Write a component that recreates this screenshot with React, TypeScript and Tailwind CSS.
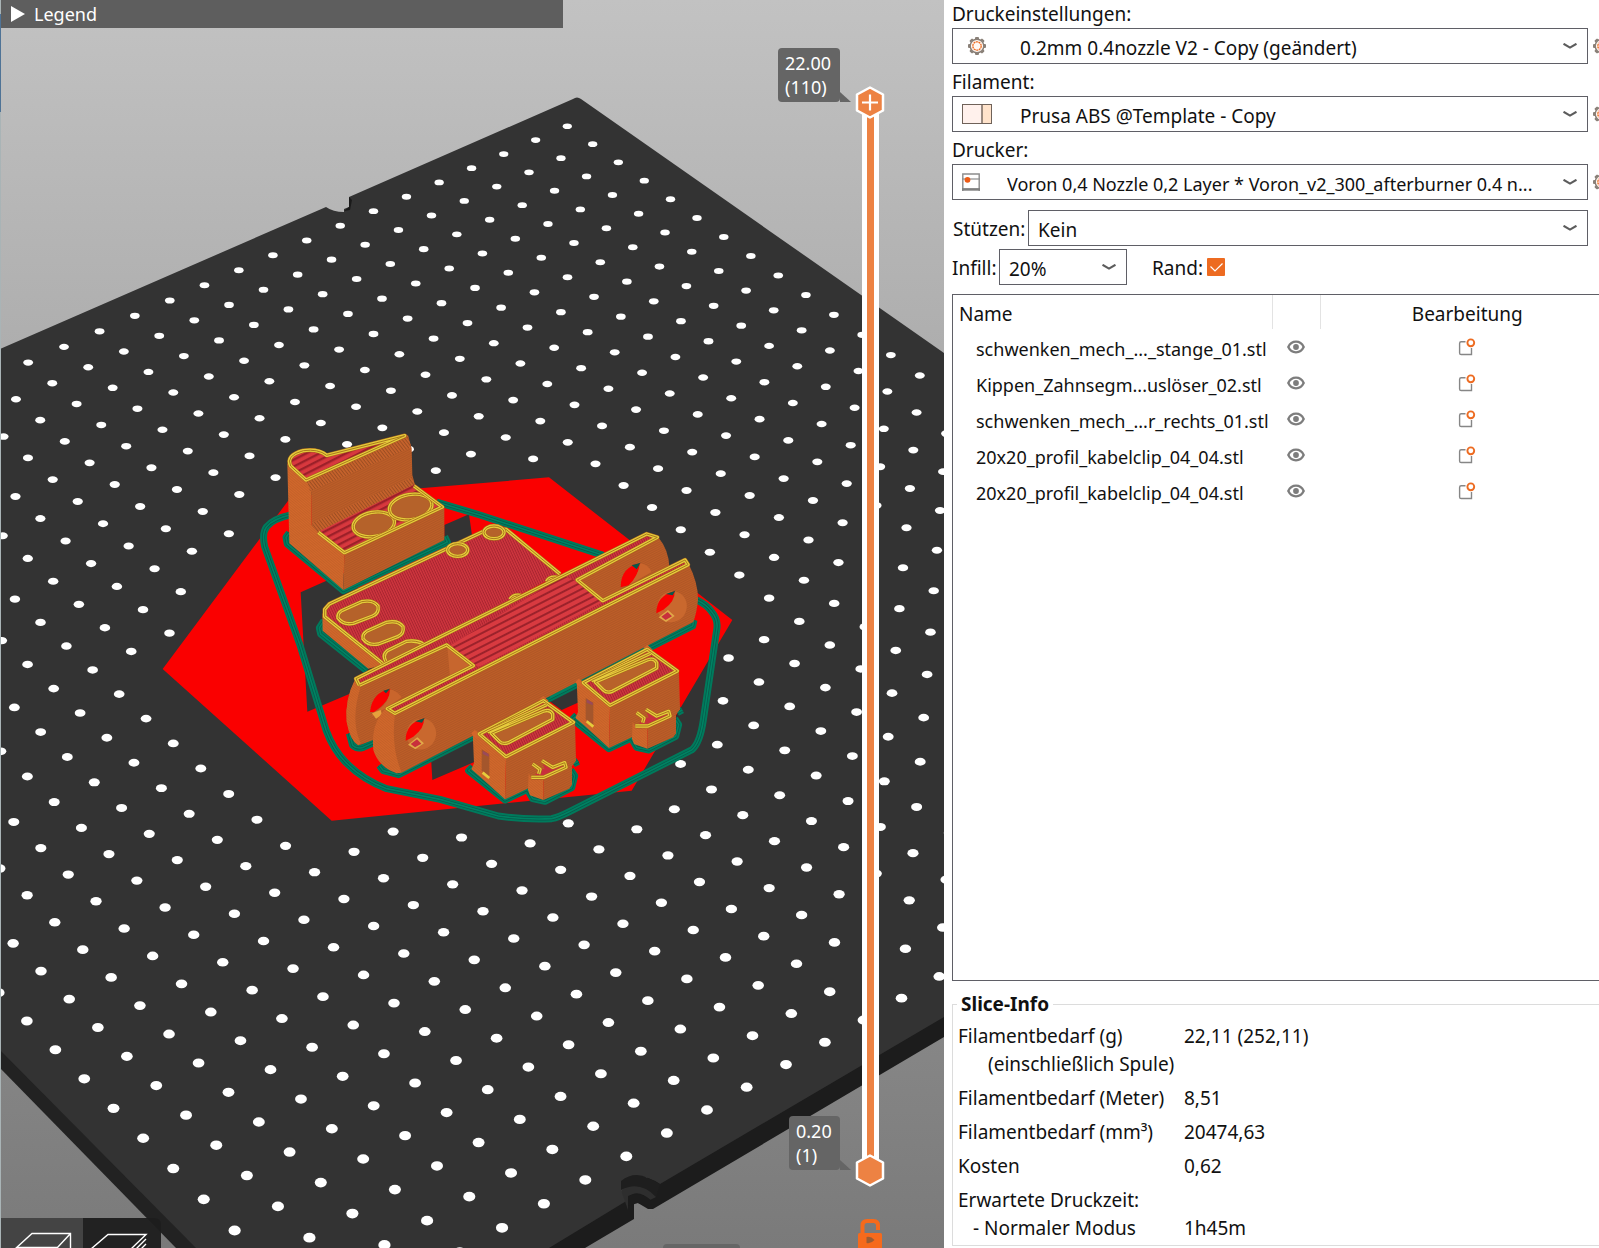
import React, { useState } from 'react';

interface Preset {
    id: string;
    label: string;
    value: string;
    indent: string;
    icon: React.ReactNode;
}

const GEAR_TEETH = [0, 45, 90, 135, 180, 225, 270, 315];

const GearIcon: React.FC = () => (
    <svg className="w-[18px] h-[18px] shrink-0" viewBox="0 0 18 18" fill="none">
        {GEAR_TEETH.map((angle) => (
            <rect key={angle} x="7" y="0" width="4" height="4" rx="1" fill="#8a8078" transform={`rotate(${angle} 9 9)`} />
        ))}
        <circle cx="9" cy="9" r="6.8" fill="#fff8f2" stroke="#8a8078" strokeWidth="1.4" />
        <circle cx="9" cy="9" r="4.2" stroke="#ed6b21" strokeWidth="1.3" strokeDasharray="2 .6" />
    </svg>
);

const SpoolIcon: React.FC = () => (
    <svg className="w-[30px] h-5" viewBox="0 0 30 20">
        <rect x=".5" y=".5" width="29" height="19" fill="#fff1ec" stroke="#6f6259" />
        <rect x="20" y="1" width="9" height="18" fill="#ffe3cb" />
        <path d="M20 0v20" stroke="#6f6259" strokeWidth="1.4" />
    </svg>
);

const PrinterIcon: React.FC = () => (
    <svg className="w-[18px] h-[18px]" viewBox="0 0 18 18" fill="none">
        <path d="M.8 18V1h16.4v17" stroke="#8c8c8c" strokeWidth="1.4" />
        <path d="M0 6h18" stroke="#8c8c8c" strokeWidth="1.2" />
        <path d="M0 16.4h18" stroke="#808080" strokeWidth="2.6" />
        <circle cx="5.5" cy="6.8" r="2.9" fill="#ed5b16" />
    </svg>
);

const EyeIcon: React.FC = () => (
    <svg className="w-[18px] h-3.5" viewBox="0 0 18 14" fill="none">
        <path d="M1.3 7C3 3.4 5.8 1.7 9 1.7s6 1.7 7.7 5.3c-1.7 3.6-4.5 5.3-7.7 5.3S3 10.6 1.3 7z" stroke="#7d7d7d" strokeWidth="2.3" />
        <circle cx="9" cy="7" r="2.9" fill="#7d7d7d" />
    </svg>
);

const EditIcon: React.FC = () => (
    <svg className="w-[18px] h-[18px]" viewBox="0 0 18 18" fill="none">
        <path d="M7.5 3.8H3.2Q1.6 3.8 1.6 5.4V14.9Q1.6 16.5 3.2 16.5H13.5V10" stroke="#868686" strokeWidth="1.4" />
        <circle cx="12.8" cy="4.8" r="3.4" stroke="#ed6b21" strokeWidth="1.9" />
    </svg>
);

const presets: Preset[] = [
    { id: 'print', label: 'Druckeinstellungen:', value: '0.2mm 0.4nozzle V2 - Copy (geändert)', indent: 'pl-[67px]', icon: <span className="pl-1.5"><GearIcon /></span> },
    { id: 'filament', label: 'Filament:', value: 'Prusa ABS @Template - Copy', indent: 'pl-[67px]', icon: <SpoolIcon /> },
    { id: 'printer', label: 'Drucker:', value: 'Voron 0,4 Nozzle 0,2 Layer * Voron_v2_300_afterburner 0.4 n...', indent: 'pl-[54px] text-lg', icon: <PrinterIcon /> },
];

const objects = [
    'schwenken_mech_..._stange_01.stl',
    'Kippen_Zahnsegm...uslöser_02.stl',
    'schwenken_mech_...r_rechts_01.stl',
    '20x20_profil_kabelclip_04_04.stl',
    '20x20_profil_kabelclip_04_04.stl',
];

const sliceInfo = [
    { label: 'Filamentbedarf (g)', sub: '(einschließlich Spule)', subIndent: 'pl-[30px]', value: '22,11 (252,11)', low: false },
    { label: 'Filamentbedarf (Meter)', value: '8,51', low: false },
    { label: 'Filamentbedarf (mm³)', value: '20474,63', low: false },
    { label: 'Kosten', value: '0,62', low: false },
    { label: 'Erwartete Druckzeit:', sub: '- Normaler Modus', subIndent: 'pl-[15px]', value: '1h45m', low: true },
];

const Combo: React.FC<{ id: string; value: string; indent: string; icon?: React.ReactNode; className: string }> = ({ id, value, indent, icon, className }) => (
    <div className={`relative h-9 ${className}`}>
        <select id={id} className={`w-full h-full appearance-none border border-[#5f5f66] bg-white pt-1 pr-8 outline-none ${indent}`}>
            <option>{value}</option>
        </select>
        {icon && <span className="pointer-events-none absolute inset-y-0 left-2.5 flex items-center">{icon}</span>}
        <svg className="pointer-events-none absolute right-[11px] top-[15px] h-1.5 w-3.5" viewBox="0 0 14 6" fill="none">
            <path d="M.5 .8L7 4.6L13.5 .8" stroke="#5c5c5c" strokeWidth="2.2" />
        </svg>
    </div>
);

// corners of the red area on the plate
const RED_AREA = [
    [163, 669],
    [292, 496],
    [423, 488],
    [549, 477],
    [732, 620],
    [632, 791],
    [332, 821],
];

const distanceToRedArea = (x: number, y: number) =>
    Math.min(
        ...RED_AREA.map(([x1, y1], n) => {
            const [x2, y2] = RED_AREA[(n + 1) % RED_AREA.length];
            const dx = x2 - x1;
            const dy = y2 - y1;
            const t = Math.max(0, Math.min(1, ((x - x1) * dx + (y - y1) * dy) / (dx * dx + dy * dy)));
            return Math.hypot(x - x1 - t * dx, y - y1 - t * dy);
        })
    );

// 29 x 29 grid of dots on the build plate, seen in perspective
const bedDots = Array.from({ length: 29 * 29 }, (_, n) => {
    const i = n % 29;
    const j = Math.floor(n / 29);
    const w = 1 - 0.00404 * i - 0.00528 * j;
    return {
        x: (567.3 - 33.81 * i + 22.26 * j) / w,
        y: (126.2 + 13.31 * i + 17.2 * j) / w,
        rx: 4.6 / w,
        ry: 2.8 / (w * w),
    };
}).filter((dot) => distanceToRedArea(dot.x, dot.y) > 15);

const Bead: React.FC<{ d: string }> = ({ d }) => (
    <g fill="none" strokeLinejoin="round">
        <path d={d} stroke="#a8641c" strokeWidth="13" />
        <path d={d} stroke="#e6cc3c" strokeWidth="10" />
        <path d={d} stroke="#a9791c" strokeWidth="3" />
    </g>
);

const Brim: React.FC<{ d: string }> = ({ d }) => (
    <g fill="none" strokeLinejoin="round">
        <path d={d} stroke="#007a5c" strokeWidth="21" />
        <path d={d} stroke="#07594a" strokeWidth="9" />
        <path d={d} stroke="#008262" strokeWidth="5" />
    </g>
);

const Clip: React.FC = () => (
    <g>
        <Brim d="M668 1100L656 1112L765 1200L832 1168L848 1196L885 1204L965 1163L974 1128L962 1110M970 1092L985 1084" />
        <path d="M668 995L690 1000L768 1075L765 1198L690 1130L664 1108L672 1090Z" fill="url(#wallLeft)" />
        <path d="M768 1075L975 967L978 1082L965 1100L835 1165L765 1198Z" fill="url(#wallFront)" />
        <path d="M695 1048L718 1062V1130L695 1112Z" fill="#a4562c" />
        <path d="M698 1052L716 1062V1070L698 1062Z" fill="#9a4a5a" />
        <path d="M698 1118L718 1134" stroke="#e6cc3c" strokeWidth="8" />
        <path d="M664 1000L674 990L690 1000L690 1016L672 1010ZM868 898L880 888L896 903L885 912Z" fill="#d4662a" />
        <path d="M688 1002L880 900L973 967L768 1073Z" fill="url(#solidFine)" />
        <Bead d="M688 1002L880 902L970 967L768 1070Z" />
        <path d="M722 1005L890 930L910 945V960L775 1032H752Z" fill="#b8622a" />
        <Bead d="M712 996L890 914M724 1000L880 934Q900 926 908 942V958L775 1028Q758 1034 748 1024Z" />
        <path d="M836 1120L848 1140L880 1138V1200L840 1186L834 1170Z" fill="url(#wallLeft)" />
        <path d="M880 1138L950 1104L966 1098V1154L958 1166L880 1200Z" fill="url(#wallFront)" />
        <path d="M848 1134L866 1112L848 1096L866 1104L884 1108L876 1084L904 1100L944 1086L948 1100L886 1130Z" fill="#c8303c" />
        <Bead d="M844 1132L882 1132L948 1102L944 1088L908 1102L876 1082M866 1122L870 1108L848 1092" />
    </g>
);

const Parts: React.FC = () => (
    <g transform="translate(250 400) scale(.33333)">
        {/* collision area */}
        <path d="M-262 807L125 288L520 264L897 232L1447 660L1145 1172L245 1262Z" fill="#fa0000" />
        <path d="M583 375L657 343L668 420L583 460ZM152 577L290 515L420 700V830L172 935ZM543 1070L680 1010V1083L547 1140ZM880 890L1010 840L990 905L935 930Z" fill="#333" />

        {/* skirt */}
        <Brim d="M125 344Q70 356 50 380Q35 400 44 440L150 735L228 990Q250 1050 290 1090Q340 1140 410 1166L570 1198L745 1248Q830 1260 905 1256Q925 1252 960 1234L1325 1050Q1350 1030 1360 960L1400 690Q1406 660 1385 635Q1368 612 1340 600M560 306L690 345L1060 466" />

        {/* slide block */}
        <Brim d="M118 398L108 412L112 432L280 572L592 426L584 410" />
        <path d="M112 190L118 430L280 570L283 460L205 395L185 375L183 265L168 240Z" fill="url(#wallLeft)" />
        <path d="M168 240L470 103L485 145L487 225L495 255L205 397L185 378L183 265Z" fill="url(#wallFront)" />
        <path d="M172 244L474 106L484 142L180 274ZM185 370L486 232L495 256L205 400Z" fill="url(#ridges)" />
        <path d="M168 240L120 198Q106 162 160 150Q205 144 230 165L470 105Z" fill="url(#solidCoarse)" />
        <Bead d="M168 240L122 198Q106 166 160 152Q205 146 230 166L464 107Z" />
        <path d="M205 395L490 255L580 320L283 460Z" fill="url(#solidCoarse)" />
        <path d="M283 460L583 320V420L280 570Z" fill="url(#wallFront)" />
        <ellipse cx="372" cy="373" rx="62" ry="36" fill="#b5622a" transform="rotate(-10 372 373)" />
        <ellipse cx="482" cy="321" rx="64" ry="36" fill="#b5622a" transform="rotate(-10 482 321)" />
        <Bead d="M310 384A62 36 -10 1 1 433 362A62 36 -10 1 1 310 384Z" />
        <Bead d="M419 332A64 36 -10 1 1 545 310A64 36 -10 1 1 419 332Z" />
        <Bead d="M205 397L283 458L577 321L492 258" />

        {/* flat plate */}
        <Brim d="M222 662L208 684L212 702L350 812" />
        <path d="M217 640L218 692L355 806L400 795L300 700Z" fill="url(#wallLeft)" />
        <path d="M222 630L236 612L722 382L768 388L930 522L400 795L222 650Z" fill="url(#solidFine)" />
        <Bead d="M400 792L224 650V628L238 612L722 384L768 388L930 522" />
        <g fill="#b5622a">
            <ellipse cx="623" cy="450" rx="30" ry="19" />
            <ellipse cx="732" cy="397" rx="30" ry="19" />
            <path d="M275 632L335 605Q370 598 384 618Q388 640 368 648L310 670Q280 676 264 654Q262 640 275 632Z" />
            <path d="M350 694L410 667Q445 660 459 680Q463 702 443 710L385 732Q355 738 339 716Q337 702 350 694Z" />
            <path d="M412 752L470 724Q500 720 516 730L412 785Q396 770 412 752Z" />
        </g>
        <Bead d="M593 450A30 19 0 1 1 653 450A30 19 0 1 1 593 450Z" />
        <Bead d="M702 397A30 19 0 1 1 762 397A30 19 0 1 1 702 397Z" />
        <Bead d="M275 632L335 605Q370 598 384 618Q388 640 368 648L310 670Q280 676 264 654Q262 640 275 632Z" />
        <Bead d="M350 694L410 667Q445 660 459 680Q463 702 443 710L385 732Q355 738 339 716Q337 702 350 694Z" />
        <Bead d="M408 784Q396 766 412 752L470 724Q500 720 520 732M780 598Q790 582 812 586M890 545Q896 528 924 532" />

        {/* fork arm */}
        <Brim d="M298 1000L308 1036Q320 1048 340 1042L380 1024M388 1096L400 1112L446 1124L1328 678L1332 660M900 890L1000 838" />
        <path d="M315 838Q284 900 290 965Q300 1020 325 1036L380 1016L420 930L560 860L590 735Z" fill="url(#wallFront)" />
        <path d="M316 838Q284 900 290 965Q300 1020 325 1036L332 1030Q300 960 332 860Z" fill="url(#wallLeft)" />
        <path d="M330 858L590 735L675 797L410 925L340 945Z" fill="url(#wallFront)" />
        <path d="M592 738L672 797L600 832Z" fill="#c7662e" />
        <path d="M360 936Q366 876 422 867Q420 905 372 936Z" fill="#fa0000" />
        <path d="M400 872L420 866L408 880Z" fill="#07594a" />
        <path d="M420 868Q440 872 455 892L408 925L366 948Q366 938 385 930Q420 905 420 868Z" fill="#c9652c" />
        <path d="M366 940L392 930L396 944L378 956Z" fill="#e6a03c" />

        <path d="M980 540L1225 412Q1256 450 1258 500L1060 605Z" fill="url(#wallFront)" />
        <path d="M1112 562Q1112 500 1172 490Q1160 540 1136 556Z" fill="#fa0000" />
        <path d="M1145 496L1172 488L1160 508Z" fill="#07594a" />
        <path d="M1170 490Q1196 494 1204 516L1136 556Q1164 530 1170 490Z" fill="#c9652c" />

        <path d="M320 835L1190 400L1225 412L980 540L1060 605L1305 478L1318 492L435 942L410 925L675 797L590 735L330 858Z" fill="url(#solidFine)" />
        <path d="M600 737L940 528L978 542L1060 605L690 800L672 795Z" fill="url(#solidLong)" />
        <path d="M408 925L435 942L458 1030L455 1118L440 1120Q385 1100 370 1050Q362 970 408 925Z" fill="url(#wallLeft)" />
        <path d="M435 942L1315 490Q1345 550 1344 600Q1340 640 1330 666L455 1118Q422 1040 435 942Z" fill="url(#wallFront)" />
        <Bead d="M328 856L318 836L1190 402L1222 412L982 540L1058 602L1305 480L1314 494L435 940L412 926L670 797L590 735L328 856" />

        <g id="bore">
            <ellipse cx="514" cy="1002" rx="44" ry="47" fill="#c9682e" transform="rotate(20 514 1002)" />
            <path d="M467 1022Q466 970 522 955Q524 985 490 1010Q476 1018 467 1022Z" fill="#fa0000" />
            <path d="M496 964L524 954L516 968Z" fill="#07594a" />
            <path d="M474 1034L502 1012L522 1030L496 1048Z" fill="#e0a848" />
            <path d="M482 1032L501 1018L514 1031L495 1042Z" fill="#c8303c" />
        </g>
        <use href="#bore" x="752" y="-382" />

        <use href="#kabelclip" x="312" y="-154" />
        <g id="kabelclip">
            <Clip />
        </g>
    </g>
);

const Scene: React.FC = () => (
    <svg className="absolute inset-0 h-full w-full" viewBox="0 0 944 1248" preserveAspectRatio="xMidYMin slice">
        <defs>
            <linearGradient id="sky" x1="0" y1="0" x2="0" y2="1">
                <stop offset="0" stopColor="#c2c2c2" />
                <stop offset="1" stopColor="#7a7a7a" />
            </linearGradient>
            <pattern id="wallFront" width="6" height="6" patternUnits="userSpaceOnUse" patternTransform="rotate(-27)">
                <rect width="6" height="6" fill="#bd5e28" />
                <rect width="6" height="2" fill="#aa5425" />
            </pattern>
            <pattern id="wallLeft" width="6" height="6" patternUnits="userSpaceOnUse" patternTransform="rotate(40)">
                <rect width="6" height="6" fill="#d2682b" />
                <rect width="6" height="2" fill="#bd5d28" />
            </pattern>
            <pattern id="ridges" width="8" height="8" patternUnits="userSpaceOnUse" patternTransform="rotate(52)">
                <rect width="8" height="8" fill="#c7632c" />
                <rect width="8" height="3" fill="#9c4e22" />
            </pattern>
            <pattern id="solidFine" width="7" height="7" patternUnits="userSpaceOnUse" patternTransform="rotate(65)">
                <rect width="7" height="7" fill="#d0363f" />
                <rect width="7" height="3" fill="#a8252f" />
            </pattern>
            <pattern id="solidCoarse" width="18" height="18" patternUnits="userSpaceOnUse" patternTransform="rotate(-27)">
                <rect width="18" height="18" fill="#d8383e" />
                <rect width="18" height="7" fill="#9c2029" />
            </pattern>
            <pattern id="solidLong" width="18" height="18" patternUnits="userSpaceOnUse" patternTransform="rotate(-27)">
                <rect width="18" height="18" fill="#d83a40" />
                <rect width="18" height="6" fill="#9c222b" />
            </pattern>
        </defs>
        <rect width="944" height="1248" fill="url(#sky)" />

        {/* build plate: side walls, top face, dots */}
        <path d="M0 1040L215 1248H176L0 1068Z" fill="#222" />
        <path d="M944 1000L530 1248H585L634 1219V1203L638 1203L648 1209H653L944 1037Z" fill="#1c1c1c" />
        <path d="M0 349L326 207Q333 212 344 212V209L349 207V197L573 99Q577 96 581 99L944 353V1017L660 1184Q640 1170 621 1182V1190L628 1200L549 1248H196L0 1050Z" fill="#333" />
        <path d="M349 197V207L344 211L350 210L352 200Z" fill="#1a1a1a" />
        <path d="M621 1181Q634 1171 648 1178L660 1184L656 1198Q640 1186 621 1190Z" fill="#1e1e1e" />
        <path d="M621 1190Q640 1180 656 1197L650 1200Q638 1188 628 1197L628 1210Z" fill="#2e2e2e" />
        <path d="M628 1196Q640 1190 652 1201L650 1208L638 1203L628 1206Z" fill="#1c1c1c" />
        <g fill="#fff">
            {bedDots.map((dot, n) => (
                <ellipse key={n} cx={dot.x} cy={dot.y} rx={dot.rx} ry={dot.ry} />
            ))}
        </g>

        <Parts />
        <path d="M.5 0V1248" stroke="#a9b4b6" />
        <path d="M.5 14V112" stroke="#4f7396" />
    </svg>
);

const HEXAGON = 'M15 1.5L28 8.5V24.5L15 31.5L2 24.5V8.5Z';

const LayerSlider: React.FC = () => {
    const [top, setTop] = useState(110);
    const [bottom, setBottom] = useState(1);

    return (
        <div className="absolute right-[59px] top-[86px] bottom-[61px] flex w-[30px] flex-col items-center">
            <div className="absolute inset-y-4 flex w-[17px] justify-center bg-white">
                <div className="w-[7px] bg-[#ed8243]" />
            </div>
            <svg className="relative h-[33px] w-[30px]" viewBox="0 0 30 33">
                <path d={HEXAGON} fill="#ed8243" stroke="#fff" strokeWidth="2.5" strokeLinejoin="round" />
                <path d="M7 16.5H23M15 8.5V24.5" stroke="#fff" strokeWidth="2.2" />
            </svg>
            <svg className="relative mt-auto h-[33px] w-[30px]" viewBox="0 0 30 33">
                <path d={HEXAGON} fill="#ed8243" stroke="#fff" strokeWidth="2.5" strokeLinejoin="round" />
            </svg>
            <input type="range" min={1} max={110} value={top} onChange={(e) => setTop(Number(e.target.value))} aria-label="22.00" className="absolute inset-x-0 top-0 h-1/2 opacity-0 [writing-mode:vertical-lr] [direction:rtl]" />
            <input type="range" min={1} max={110} value={bottom} onChange={(e) => setBottom(Number(e.target.value))} aria-label="0.20" className="absolute inset-x-0 bottom-0 h-1/2 opacity-0 [writing-mode:vertical-lr] [direction:rtl]" />
        </div>
    );
};

const LayerTag: React.FC<{ height: string; layer: string; className: string }> = ({ height, layer, className }) => (
    <div className={`absolute right-[104px] rounded-sm bg-[#656565] px-[7px] py-[3px] text-lg leading-6 text-white ${className}`}>
        <div>{height}</div>
        <div>{layer}</div>
        <svg className="absolute bottom-0 left-full h-[11px] w-[11px]" viewBox="0 0 11 11">
            <path d="M-1 0L11 11H-1Z" fill="#656565" />
        </svg>
    </div>
);

const Viewport: React.FC = () => (
    <main className="relative overflow-hidden text-white">
        <Scene />
        <button className="relative ml-px flex h-7 w-[562px] items-center gap-[9px] bg-[#5e5e5e] pl-2.5 text-lg">
            <svg className="h-4 w-3.5" viewBox="0 0 14 16">
                <path d="M0 0L14 8L0 16Z" fill="#fff" />
            </svg>
            Legend
        </button>

        <LayerTag height="22.00" layer="(110)" className="top-12 w-[62px]" />
        <LayerTag height="0.20" layer="(1)" className="bottom-[78px] w-[51px]" />
        <LayerSlider />

        <button className="absolute bottom-0 right-[62px] h-[29px] w-6" aria-label="Lock">
            <svg className="h-full w-full" viewBox="0 0 24 29" fill="none">
                <path d="M4.5 15V6.5Q4.5 2 9 2H15.5Q20 2 20 6.5V11" stroke="#f66a1c" strokeWidth="4" />
                <rect y="14" width="24" height="18" rx="1.5" fill="#f66a1c" />
                <path d="M8.5 18Q13 17 16.5 21Q13 25 8.5 24Z" fill="#9a5c34" />
            </svg>
        </button>
        <div className="absolute bottom-0 right-[204px] h-1 w-[77px] rounded-t-sm bg-[#666]" />

        <div className="absolute bottom-0 left-px flex h-[30px]">
            <button className="w-[82px] bg-[#444]" aria-label="3D">
                <svg className="h-full w-full" viewBox="0 0 82 30" fill="none" stroke="#fff" strokeWidth="1.4">
                    <path d="M14 31L31 15.5H69.5V31M56 30L69.5 15.5" />
                    <path d="M16 29.5H56" />
                </svg>
            </button>
            <button className="w-[78px] rounded-tr-md bg-[#1e1e1e]/95" aria-label="Preview">
                <svg className="h-full w-full" viewBox="0 0 78 30" fill="none" stroke="#fff" strokeWidth="1.4">
                    <path d="M8 31L25 16.5H63L48 31M63 21L53 31M63 26L58 31" />
                </svg>
            </button>
        </div>
    </main>
);

const Sidebar: React.FC = () => (
    <aside className="overflow-hidden bg-white pl-2">
        <div className="-mr-4 flex min-h-screen flex-col pb-0.5">
            <div className="flex flex-col gap-1">
                {presets.map((preset) => (
                    <div key={preset.id}>
                        <label htmlFor={preset.id} className="flex h-7 items-center">{preset.label}</label>
                        <div className="flex items-center gap-[5px]">
                            <Combo id={preset.id} value={preset.value} indent={preset.indent} icon={preset.icon} className="min-w-0 flex-1" />
                            <button className="w-[22px]" aria-label={preset.label}>
                                <GearIcon />
                            </button>
                        </div>
                    </div>
                ))}
            </div>

            <div className="mt-2.5 mr-[27px] flex items-center">
                <label htmlFor="supports" className="w-[76px] pt-0.5 pl-px">Stützen:</label>
                <Combo id="supports" value="Kein" indent="pl-[9px]" className="min-w-0 flex-1" />
            </div>

            <div className="mt-[3px] flex items-center">
                <label htmlFor="infill" className="w-[47px] pt-0.5">Infill:</label>
                <Combo id="infill" value="20%" indent="pl-[9px]" className="w-32" />
                <label htmlFor="brim" className="ml-[25px] w-[55px] pt-0.5">Rand:</label>
                <span className="relative h-[18px] w-[18px]">
                    <input id="brim" type="checkbox" defaultChecked className="block h-full w-full appearance-none rounded-[1px] bg-[#ed6b21]" />
                    <svg className="pointer-events-none absolute inset-0" viewBox="0 0 18 18" fill="none">
                        <path d="M3.5 8.5L8 13L15.5 5.5" stroke="#fff" strokeWidth="1.2" />
                    </svg>
                </span>
            </div>

            <div className="mt-[9px] flex-1 border border-[#5f5f66]">
                <table className="w-full table-fixed">
                    <thead>
                        <tr className="h-[34px]">
                            <th className="w-[319px] border-r border-[#e3e3e3] pl-1.5 pt-1 text-left font-normal">Name</th>
                            <th className="w-12 border-r border-[#e3e3e3]" />
                            <th className="pt-1 font-normal">Bearbeitung</th>
                        </tr>
                    </thead>
                    <tbody>
                        {objects.map((name, index) => (
                            <tr key={index} className="h-9">
                                <td className="whitespace-nowrap pl-[23px] pt-1 text-lg leading-6">{name}</td>
                                <td>
                                    <button className="mx-auto block" aria-label="Sichtbar"><EyeIcon /></button>
                                </td>
                                <td>
                                    <button className="mx-auto block" aria-label="Bearbeiten"><EditIcon /></button>
                                </td>
                            </tr>
                        ))}
                    </tbody>
                </table>
            </div>

            <fieldset className="mt-[9px] border border-[#dcdcdc] pb-[3px]">
                <legend className="ml-1 px-1 font-bold leading-7">Slice-Info</legend>
                <dl className="flex flex-col gap-1.5 pl-[5px] pt-1 leading-7">
                    {sliceInfo.map((row) => (
                        <div key={row.value} className="flex">
                            <dt className="w-[226px] whitespace-nowrap">
                                {row.label}
                                {row.sub && <div className={row.subIndent}>{row.sub}</div>}
                            </dt>
                            <dd className={row.low ? 'self-end' : ''}>{row.value}</dd>
                        </div>
                    ))}
                </dl>
            </fieldset>
        </div>
    </aside>
);

const App: React.FC = () => {
    return (
        <div className="grid min-h-screen grid-cols-[minmax(0,944fr)_minmax(0,655fr)] font-['Noto_Sans',sans-serif] text-[19px] leading-6 text-[#111]">
            <Viewport />
            <Sidebar />
        </div>
    );
};

export default App;
